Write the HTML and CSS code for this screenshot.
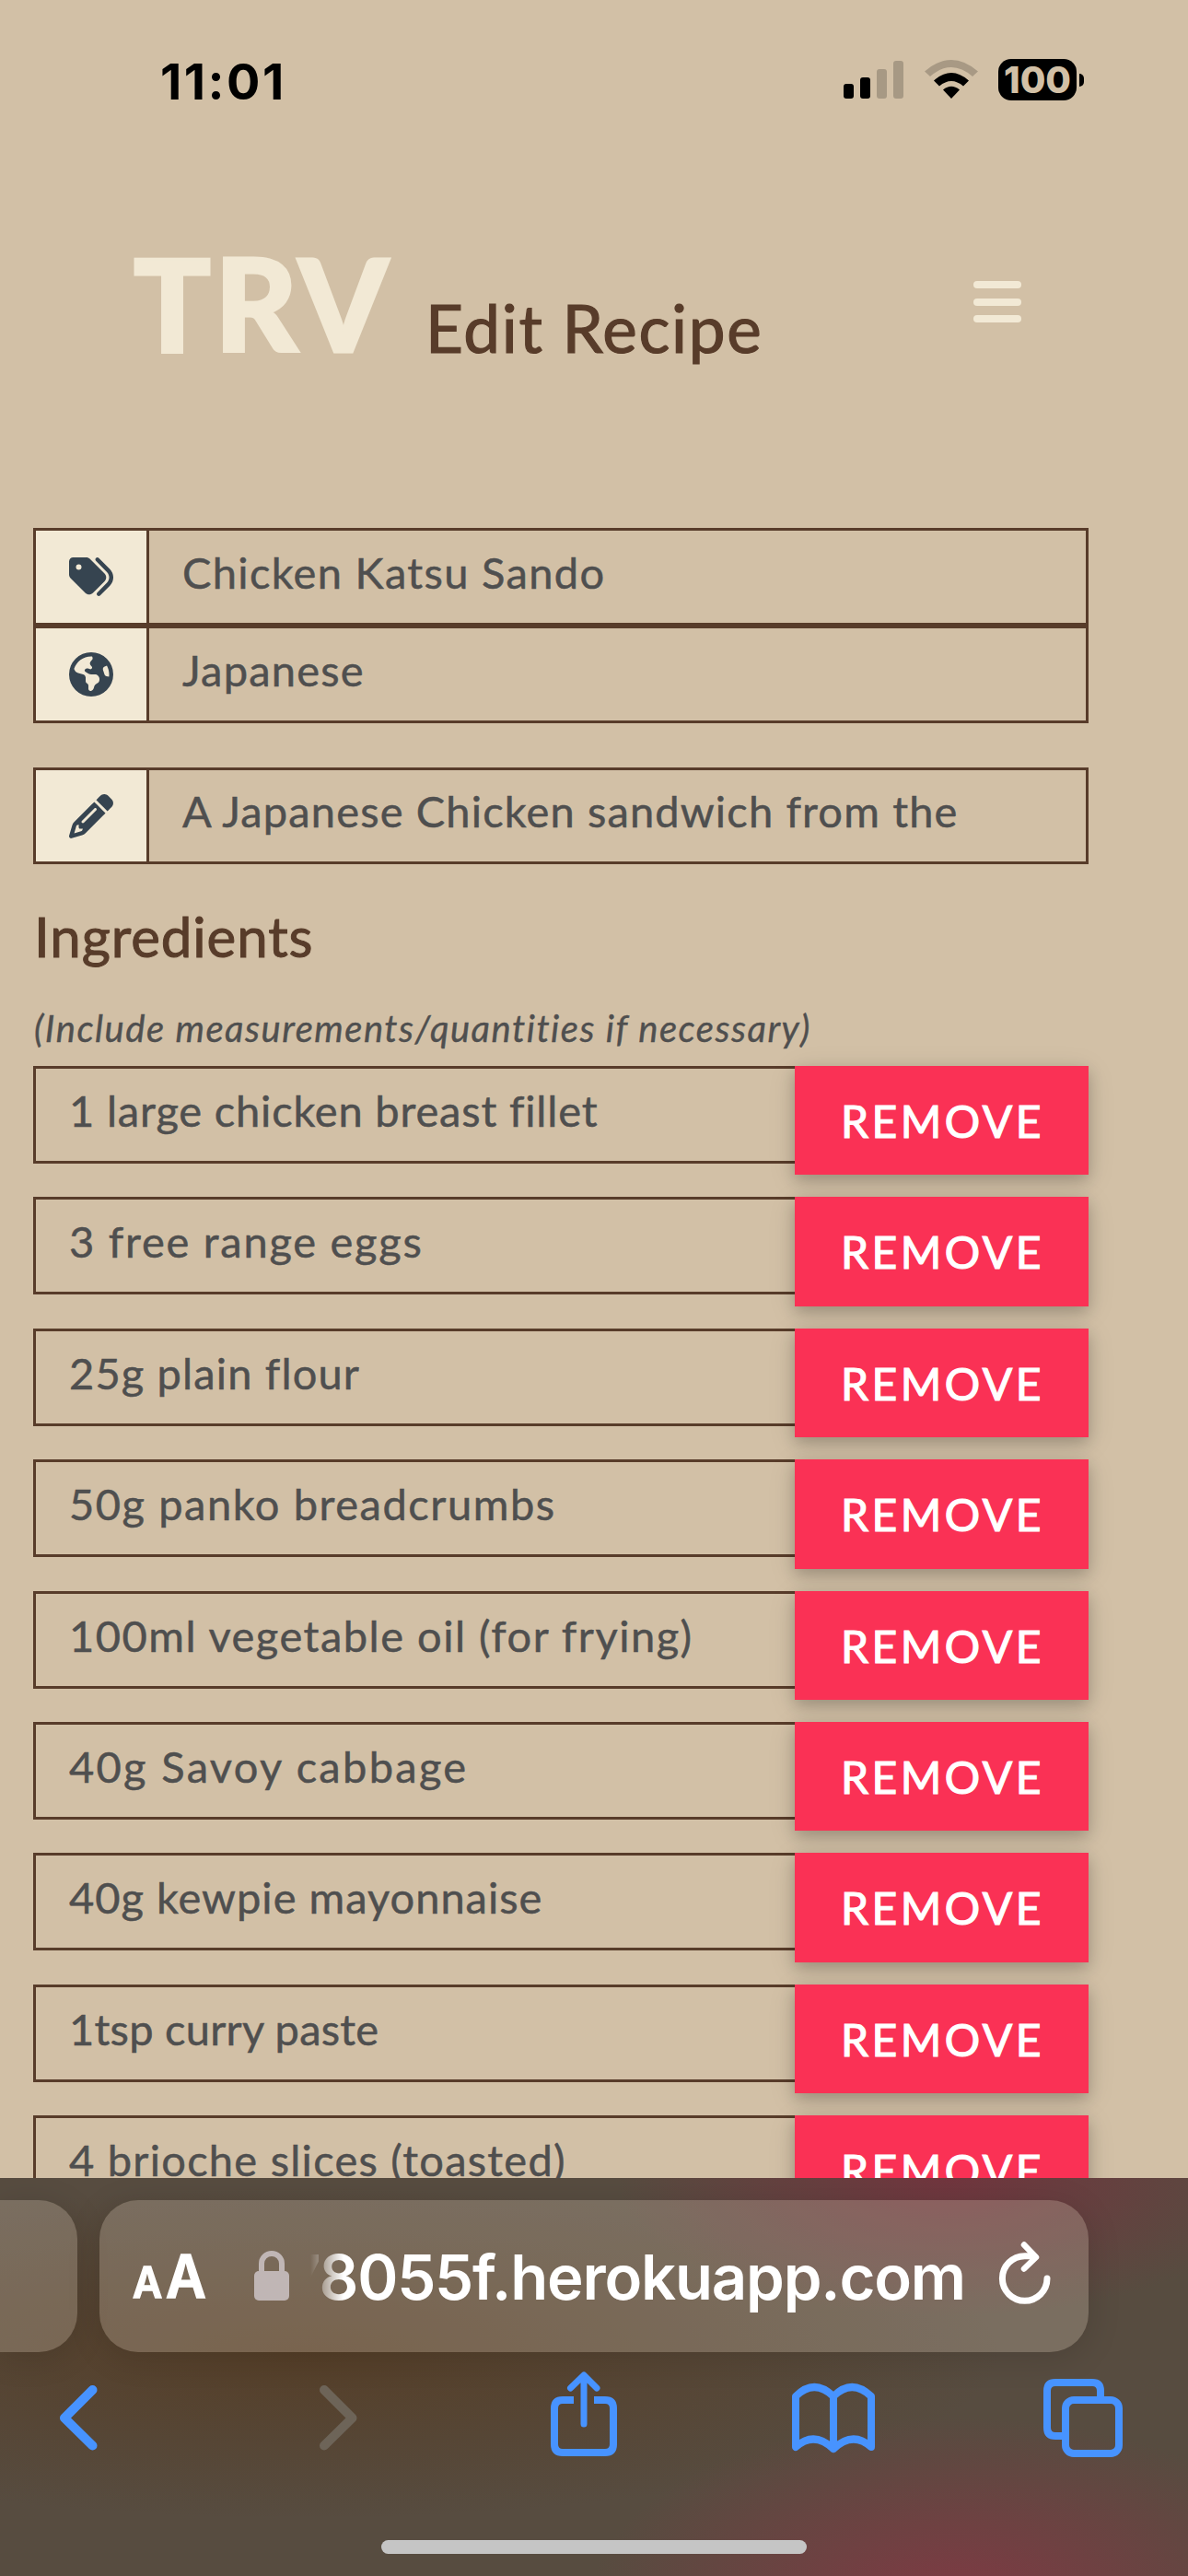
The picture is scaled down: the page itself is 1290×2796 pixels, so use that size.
FILE: index.html
```html
<!DOCTYPE html>
<html lang="en">
<head>
<meta charset="utf-8">
<title>Edit Recipe</title>
<link rel="stylesheet" href="styles.css">
</head>
<body>
<div class="screen">
  <div class="status">
    <span class="time">11:01</span>
    <div class="indicators">
      <svg class="signal" viewBox="0 0 66 42"><rect x="0" y="26" width="11" height="16" rx="3"/><rect x="18" y="19" width="11" height="23" rx="3"/><g opacity=".2"><rect x="36" y="10" width="11" height="32" rx="3"/><rect x="54" y="1" width="11" height="41" rx="3"/></g></svg>
      <svg class="wifi" viewBox="0 0 58 43"><path opacity=".2" d="M0 13.500Q29-11.500 58 13.500L52 19Q29-1 6 19Z"/><path d="M10 23.500Q29 6.500 48 23.500L42 29.500Q29 18.500 16 29.500Z"/><path d="M20 33.500Q29 26 38 33.500L29 43Z"/></svg>
      <div class="battery"><span>100</span></div>
      <i class="nub"></i>
    </div>
  </div>
  <header class="header">
    <h1 class="brand">TRV</h1>
    <span class="title">Edit Recipe</span>
    <div class="menu"><i></i><i></i><i></i></div>
  </header>
  <main class="form">
    <div class="field"><div class="icon"><svg viewBox="0 0 512 512"><path d="M345 39.1L472.8 168.4c52.4 53 52.4 138.2 0 191.2L360.8 472.900c-9.300 9.400-24.500 9.500-33.900 .2s-9.500-24.500-.2-33.900L438.600 325.900c33.900-34.300 33.900-89.400 0-123.700L310.900 72.900c-9.300-9.400-9.200-24.600 .2-33.900s24.600-9.200 33.900 .2zM0 229.500V80C0 53.500 21.500 32 48 32H197.500c17 0 33.300 6.700 45.300 18.700l168 168c25 25 25 65.500 0 90.500L277.300 442.700c-25 25-65.500 25-90.500 0l-168-168C6.700 262.700 0 246.500 0 229.500zM144 144a32 32 0 1 0 -64 0 32 32 0 1 0 64 0z"/></svg></div><span class="value v1">Chicken Katsu Sando</span></div>
    <div class="field"><div class="icon"><svg viewBox="0 0 512 512"><path d="M57.7 193l9.400 16.400c8.300 14.500 21.900 25.200 38 29.800L163 255.700c17.200 4.900 29 20.600 29 38.500v39.900c0 11 6.200 21 16 25.900s16 14.900 16 25.900v39c0 15.600 14.900 26.900 29.900 22.600c16.100-4.600 28.600-17.500 32.700-33.800l2.800-11.200c4.200-16.900 15.200-31.400 30.300-40l8.100-4.600c15-8.500 24.200-24.500 24.200-41.700v-8.300c0-12.700-5.100-24.900-14.100-33.900l-3.900-3.900c-9-9-21.200-14.100-33.900-14.100H257c-11.100 0-22.100-2.900-31.800-8.400l-34.500-19.700c-4.300-2.500-7.600-6.500-9.200-11.200c-3.200-9.600 1.100-20 10.200-24.500l5.900-3c6.600-3.300 14.300-3.900 21.300-1.500l23.200 7.700c8.200 2.700 17.200-.4 21.900-7.500c4.700-7 4.200-16.300-1.200-22.800l-13.600-16.300c-10-12-9.900-29.500 .3-41.300l15.700-18.300c8.800-10.300 10.200-25 3.500-36.700l-2.400-4.200c-3.500-.2-6.900-.3-10.400-.3C163.100 48 84.400 108.900 57.700 193zM464 256c0-36.800-9.600-71.400-26.400-101.500L412 164.800c-15.700 6.300-23.800 23.800-18.500 39.800l16.900 50.700c3.500 10.400 12 18.300 22.600 20.900l29.100 7.300c1.200-9 1.800-18.200 1.800-27.500zM0 256a256 256 0 1 1 512 0A256 256 0 1 1 0 256z"/></svg></div><span class="value v2">Japanese</span></div>
    <div class="field gap"><div class="icon"><svg viewBox="0 0 512 512"><path d="M410.3 231l11.300-11.300-33.900-33.900-62.100-62.100L291.700 89.800l-11.300 11.300-22.600 22.600L58.600 322.900c-10.400 10.400-18 23.300-22.200 37.400L1 480.700c-2.500 8.400-.2 17.500 6.100 23.700s15.300 8.500 23.700 6.100l120.300-35.400c14.100-4.200 27-11.800 37.400-22.200L387.700 253.700 410.300 231zM160 399.400l-9.100 22.700c-4 3.100-8.500 5.400-13.300 6.900L59.400 452l23-78.100c1.400-4.900 3.800-9.400 6.900-13.300l22.700-9.100v32c0 8.800 7.200 16 16 16h32zM362.700 18.700L348.300 33.200 325.700 55.800 314.300 67.100l33.900 33.900 62.100 62.100 33.900 33.900 11.300-11.300 22.600-22.600 14.500-14.500c25-25 25-65.500 0-90.500L453.300 18.700c-25-25-65.500-25-90.500 0zm-47.400 168l-144 144c-6.200 6.200-16.400 6.200-22.600 0s-6.200-16.400 0-22.600l144-144c6.200-6.200 16.400-6.200 22.600 0s6.200 16.400 0 22.600z"/></svg></div><span class="value v3">A Japanese Chicken sandwich from the</span></div>
    <h2 class="heading">Ingredients</h2>
    <p class="hint">(Include measurements/quantities if necessary)</p>
    <div class="list">
      <div class="item"><span class="value">1 large chicken breast fillet</span><div class="remove">REMOVE</div></div>
      <div class="item"><span class="value">3 free range eggs</span><div class="remove">REMOVE</div></div>
      <div class="item"><span class="value">25g plain flour</span><div class="remove">REMOVE</div></div>
      <div class="item"><span class="value">50g panko breadcrumbs</span><div class="remove">REMOVE</div></div>
      <div class="item"><span class="value">100ml vegetable oil (for frying)</span><div class="remove">REMOVE</div></div>
      <div class="item"><span class="value">40g Savoy cabbage</span><div class="remove">REMOVE</div></div>
      <div class="item"><span class="value">40g kewpie mayonnaise</span><div class="remove">REMOVE</div></div>
      <div class="item"><span class="value">1tsp curry paste</span><div class="remove">REMOVE</div></div>
      <div class="item"><span class="value">4 brioche slices (toasted)</span><div class="remove">REMOVE</div></div>
    </div>
  </main>
</div>
<footer class="browser">
  <div class="tabs">
    <div class="tab-prev"></div>
    <div class="address">
      <div class="reader"><span class="small">A</span><span class="big">A</span></div>
      <svg class="lock" viewBox="0 0 38 54"><rect y="22" width="38" height="32" rx="5"/><path d="M8 24V14a11 11 0 0 1 22 0v10" fill="none" stroke="#c0b6b5" stroke-width="6"/></svg>
      <div class="url"><span>78055f.herokuapp.com</span></div>
      <svg class="reload" viewBox="1082 2430 62 76"><path d="M1137 2473a24.300 24.300 0 1 1-24.300-24.300h9" stroke-width="7"/><path d="M1112 2436.500l13 13.500-13 12.500" stroke-width="6.500"/></svg>
    </div>
  </div>
  <nav class="tools">
    <svg class="back" viewBox="60 2570 50 100"><path d="M100.500 2594L70 2624.500l30.500 30" stroke-width="10"/></svg>
    <svg class="forward" viewBox="342 2570 50 100"><path d="M352 2594l30.500 30.500-30.500 30" stroke-width="10"/></svg>
    <svg class="share" viewBox="594 2570 80 100"><path stroke-linecap="butt" d="M623 2605h-12q-9 0-9 9v39q0 9 9 9h46q9 0 9-9v-39q0-9-9-9h-12"/><path stroke-width="7" d="M634 2631v-52M619.500 2592l14.500-14 14 14"/></svg>
    <svg class="book" viewBox="856 2570 98 100"><path d="M864 2656v-55q20-20 41 0 20-20 41 0v55q-20-18-41 2-21-20-41-2ZM905 2601v57"/></svg>
    <svg class="pages" viewBox="1129 2570 94 100"><rect x="1157" y="2605" width="58" height="58" rx="9"/><path stroke-linecap="butt" d="M1154 2644h-8q-9 0-9-9v-40q0-9 9-9h40q9 0 9 9v7"/></svg>
  </nav>
  <div class="home"></div>
</footer>
</body>
</html>
```
FILE: styles.css
```css
* { box-sizing: border-box; margin: 0; padding: 0; }
body { width: 1290px; height: 2796px; overflow: hidden; background: #d2c0a6; font-family: Lato, sans-serif; }
.screen { height: 2364px; overflow: hidden; }

/* status bar */
.status { height: 172px; padding: 57px 0 0 174px; display: flex; font-family: Inter, sans-serif; }
.time { font-size: 54px; font-weight: 700; line-height: 63px; width: 742px; letter-spacing: 2.500px; }
.indicators { display: flex; }
.signal { width: 66px; height: 42px; margin-top: 8px; }
.wifi { width: 58px; height: 43px; margin: 7px 0 0 22px; }
.battery { margin: 7px 0 0 22px; width: 85px; height: 45px; border-radius: 14px; background: #000; color: #d2c0a6; font-size: 40px; font-weight: 800; line-height: 45px; text-align: center; }
.nub { width: 5px; height: 14px; margin: 23px 0 0 3px; background: #000; border-radius: 0 5px 5px 0; }

/* page header */
.header { height: 401px; display: flex; align-items: flex-start; padding: 0 181px 0 145px; }
.brand { font-size: 139px; font-weight: 900; line-height: 170px; color: #f2e9d5; margin-top: 72px; width: 317px; letter-spacing: 4px; -webkit-text-stroke: 3px #f2e9d5; }
.title { font-size: 71px; color: #583c2a; line-height: 85px; margin-top: 141px; flex: 1; letter-spacing: 1.700px; -webkit-text-stroke: 1.200px #583c2a; }
.menu { width: 52px; margin-top: 133px; display: grid; gap: 10.500px; }
.menu i { height: 8px; border-radius: 4px; background: #f2e9d5; }

/* recipe form */
.form { padding: 0 108px 0 36px; }
.field { display: flex; height: 106px; border: 3px solid #583c2a; }
.field.gap { margin-top: 48px; height: 105px; }
.icon { width: 123px; background: #f2e9d5; border-right: 3px solid #583c2a; display: grid; place-items: center; }
.icon svg { width: 48px; height: 48px; fill: #364450; }
.value { font-size: 47px; line-height: 90px; padding-left: 36px; color: #4f4f4f; white-space: pre; letter-spacing: 1px; -webkit-text-stroke: .5px #4f4f4f; }
.v1 { letter-spacing: 1.330px; }
.v2 { letter-spacing: 1.200px; }
.v3 { letter-spacing: 1.150px; line-height: 88px; }
.heading { font-size: 60px; font-weight: 400; color: #583c2a; margin-top: 44px; padding-left: 1px; line-height: 68px; letter-spacing: .9px; -webkit-text-stroke: 1px #583c2a; }
.hint { font-size: 40px; font-style: italic; color: #4f4f4f; margin-top: 42px; padding-left: 1px; line-height: 48px; height: 65px; letter-spacing: 1.500px; -webkit-text-stroke: .4px #4f4f4f; }
.item { display: flex; height: 118.400px; margin-bottom: 24px; }
.item .value { width: 827px; height: 106px; border: 3px solid #583c2a; border-right: 0; }
.item:nth-child(1) .value { letter-spacing: .82px; }
.item:nth-child(2) .value { letter-spacing: 1.750px; }
.item:nth-child(3) .value { letter-spacing: 1.150px; }
.item:nth-child(4) .value { letter-spacing: 1.550px; }
.item:nth-child(5) .value { letter-spacing: 1.500px; }
.item:nth-child(6) .value { letter-spacing: 2.300px; }
.item:nth-child(8) .value { letter-spacing: .25px; }
.item:nth-child(9) .value { letter-spacing: 1.250px; }
.remove { width: 319px; padding-left: 2px; background: #fa3155; color: #fff; font-size: 48px; line-height: 120px; text-align: center; letter-spacing: 3.500px; -webkit-text-stroke: 1.200px #fff; box-shadow: 0 6px 15px rgba(0,0,0,.2), 0 6px 30px rgba(0,0,0,.1); }

/* browser chrome */
.browser {
  height: 432px; padding-top: 24px; overflow: hidden;
  background:
    radial-gradient(ellipse 360px 150px at 1030px 0, rgba(122,46,62,.75), rgba(122,46,62,0)),
    radial-gradient(ellipse 400px 200px at 1040px 460px, rgba(134,54,68,.85), rgba(134,54,68,0)),
    radial-gradient(ellipse 760px 180px at 330px 190px, rgba(84,58,32,.75), rgba(84,58,32,0)),
    #574c40;
}
.tabs { display: flex; gap: 24px; height: 165px; }
.tab-prev, .address { background: rgba(225,210,190,.26); box-shadow: 0 6px 36px rgba(0,0,0,.13); }
.tab-prev { width: 84px; border-radius: 0 42px 42px 0; }
.address { width: 1074px; border-radius: 42px; display: flex; }
.reader { width: 168px; padding-left: 36px; display: flex; color: #fff; font-family: Inter, sans-serif; font-weight: 600; line-height: 80px; margin-top: 43px; align-items: baseline; -webkit-text-stroke: 1.500px #fff; }
.small { font-size: 47px; width: 36px; }
.big { font-size: 64px; }
.reader span { transform: scaleX(.94); transform-origin: 0 0; }
.lock { width: 38px; height: 54px; margin-top: 55px; fill: #c0b6b5; }
.url { width: 711px; margin-left: 23px; overflow: hidden; display: flex; justify-content: flex-end; color: #fff; font: 600 67px/167px Inter, sans-serif; letter-spacing: -1.200px; white-space: pre; -webkit-mask-image: linear-gradient(90deg, transparent, #000 36px); mask-image: linear-gradient(90deg, transparent, #000 36px); }
.reload { width: 62px; height: 76px; margin: 42px 0 0 34px; }
.reload path { fill: none; stroke: #fff; stroke-linecap: round; stroke-linejoin: round; }
.tools { height: 204px; padding-top: 17px; display: flex; }
.tools svg { height: 100px; fill: none; stroke: #4793ff; stroke-width: 8; stroke-linecap: round; stroke-linejoin: round; }
.tools .back { width: 50px; margin-left: 60px; }
.tools .forward { width: 50px; margin-left: 232px; stroke: #6d6458; }
.tools .share { width: 80px; margin-left: 202px; }
.tools .book { width: 98px; margin-left: 182px; }
.tools .pages { width: 94px; margin-left: 175px; }
.home { width: 462px; height: 15px; margin-left: 414px; border-radius: 8px; background: #c5c5c5; }
```
